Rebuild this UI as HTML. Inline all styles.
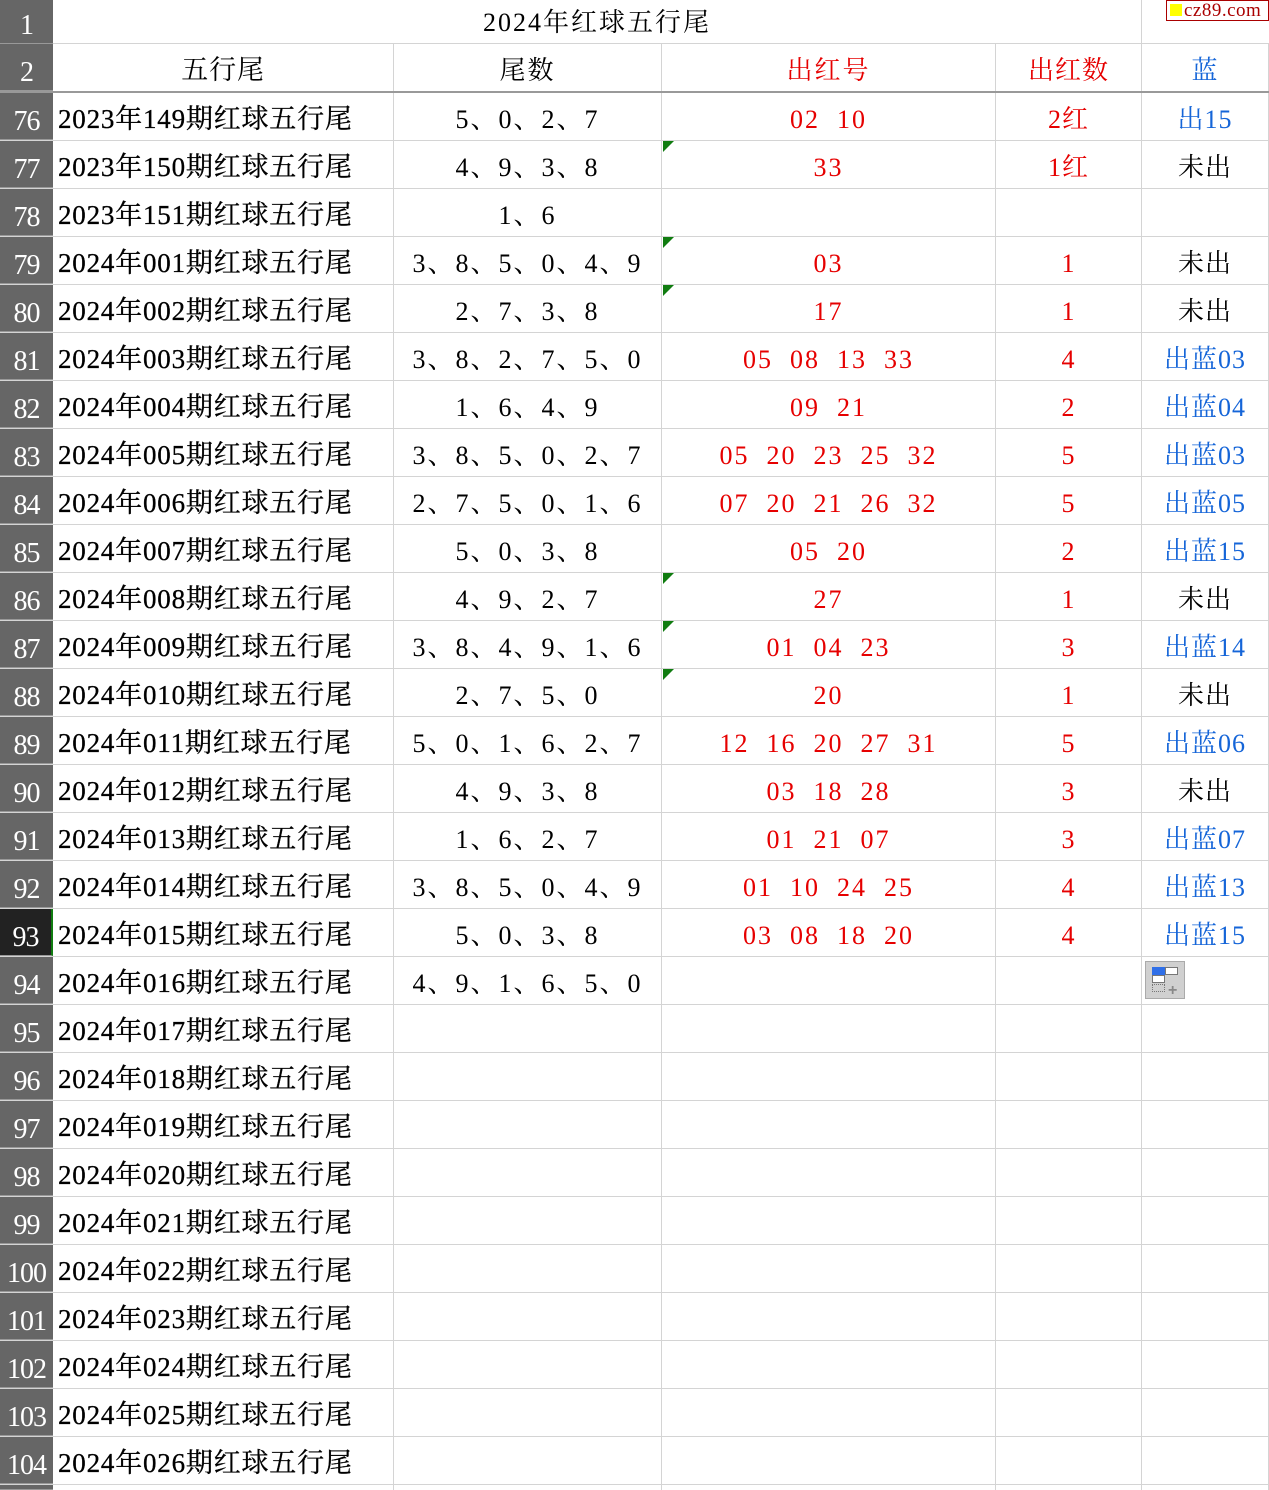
<!DOCTYPE html>
<html><head><meta charset="utf-8"><style>
*{margin:0;padding:0;box-sizing:border-box}
html,body{width:1269px;height:1490px;overflow:hidden}
body{background:#fff;font-family:"Liberation Serif","Noto Serif CJK SC",serif;position:relative}
.r{position:absolute;left:0;width:1269px;height:48px;border-bottom:1px solid #d4d4d4}
.r>div{position:absolute;top:0;height:100%;border-right:1px solid #d4d4d4;font-size:26px;line-height:53px;text-align:center;white-space:pre}
.h{left:0;width:53px;background:#666;color:#fff;border-right:none!important;border-bottom:1px solid #999;line-height:normal!important;padding-top:13px;font-size:28px!important;letter-spacing:-1px}
.a{left:53px;width:341px;text-align:left!important;padding-left:5px;font-size:27px!important;color:#000;letter-spacing:0.8px;-webkit-text-stroke:0.3px #000}
.b{left:394px;width:268px;letter-spacing:2px}
.c{left:662px;width:334px;color:#e60000;letter-spacing:2px}
.d{left:996px;width:146px;color:#e60000;letter-spacing:1px}
.e{left:1142px;width:127px;color:#1565d8;letter-spacing:1px}
.k{color:#000!important}
.t::before{content:"";position:absolute;left:1px;top:0;border-top:11px solid #107c10;border-right:11px solid transparent}
</style></head><body>
<div class="r" style="top:0;height:44px"><div class="h" style="height:44px;padding-top:10px">1</div><div style="left:53px;width:1089px;line-height:46px;letter-spacing:2px">2024年红球五行尾</div><div style="left:1142px;width:127px;border-right:none"></div></div>
<div style="position:absolute;left:1166px;top:0;width:103px;height:21px;border:1px solid #a00;background:#fff;font-size:19px;line-height:19px;color:#a00;padding-left:3px;letter-spacing:0.5px;white-space:nowrap;overflow:hidden"><span style="display:inline-block;width:12px;height:12px;background:#ff0;margin-right:2px"></span>cz89.com</div>
<div class="r" style="top:44px;height:49px;border-bottom:2px solid #999"><div class="h">2</div><div class="a" style="text-align:center!important;padding:0;-webkit-text-stroke:0">五行尾</div><div class="b">尾数</div><div class="c">出红号</div><div class="d">出红数</div><div class="e">蓝</div></div>
<div class="r" style="top:93px"><div class="h">76</div><div class="a">2023年149期红球五行尾</div><div class="b">5、0、2、7</div><div class="c">02  10</div><div class="d">2红</div><div class="e">出15</div></div>
<div class="r" style="top:141px"><div class="h">77</div><div class="a">2023年150期红球五行尾</div><div class="b">4、9、3、8</div><div class="c t">33</div><div class="d">1红</div><div class="e k">未出</div></div>
<div class="r" style="top:189px"><div class="h">78</div><div class="a">2023年151期红球五行尾</div><div class="b">1、6</div><div class="c"></div><div class="d"></div><div class="e"></div></div>
<div class="r" style="top:237px"><div class="h">79</div><div class="a">2024年001期红球五行尾</div><div class="b">3、8、5、0、4、9</div><div class="c t">03</div><div class="d">1</div><div class="e k">未出</div></div>
<div class="r" style="top:285px"><div class="h">80</div><div class="a">2024年002期红球五行尾</div><div class="b">2、7、3、8</div><div class="c t">17</div><div class="d">1</div><div class="e k">未出</div></div>
<div class="r" style="top:333px"><div class="h">81</div><div class="a">2024年003期红球五行尾</div><div class="b">3、8、2、7、5、0</div><div class="c">05  08  13  33</div><div class="d">4</div><div class="e">出蓝03</div></div>
<div class="r" style="top:381px"><div class="h">82</div><div class="a">2024年004期红球五行尾</div><div class="b">1、6、4、9</div><div class="c">09  21</div><div class="d">2</div><div class="e">出蓝04</div></div>
<div class="r" style="top:429px"><div class="h">83</div><div class="a">2024年005期红球五行尾</div><div class="b">3、8、5、0、2、7</div><div class="c">05  20  23  25  32</div><div class="d">5</div><div class="e">出蓝03</div></div>
<div class="r" style="top:477px"><div class="h">84</div><div class="a">2024年006期红球五行尾</div><div class="b">2、7、5、0、1、6</div><div class="c">07  20  21  26  32</div><div class="d">5</div><div class="e">出蓝05</div></div>
<div class="r" style="top:525px"><div class="h">85</div><div class="a">2024年007期红球五行尾</div><div class="b">5、0、3、8</div><div class="c">05  20</div><div class="d">2</div><div class="e">出蓝15</div></div>
<div class="r" style="top:573px"><div class="h">86</div><div class="a">2024年008期红球五行尾</div><div class="b">4、9、2、7</div><div class="c t">27</div><div class="d">1</div><div class="e k">未出</div></div>
<div class="r" style="top:621px"><div class="h">87</div><div class="a">2024年009期红球五行尾</div><div class="b">3、8、4、9、1、6</div><div class="c t">01  04  23</div><div class="d">3</div><div class="e">出蓝14</div></div>
<div class="r" style="top:669px"><div class="h">88</div><div class="a">2024年010期红球五行尾</div><div class="b">2、7、5、0</div><div class="c t">20</div><div class="d">1</div><div class="e k">未出</div></div>
<div class="r" style="top:717px"><div class="h">89</div><div class="a">2024年011期红球五行尾</div><div class="b">5、0、1、6、2、7</div><div class="c">12  16  20  27  31</div><div class="d">5</div><div class="e">出蓝06</div></div>
<div class="r" style="top:765px"><div class="h">90</div><div class="a">2024年012期红球五行尾</div><div class="b">4、9、3、8</div><div class="c">03  18  28</div><div class="d">3</div><div class="e k">未出</div></div>
<div class="r" style="top:813px"><div class="h">91</div><div class="a">2024年013期红球五行尾</div><div class="b">1、6、2、7</div><div class="c">01  21  07</div><div class="d">3</div><div class="e">出蓝07</div></div>
<div class="r" style="top:861px"><div class="h">92</div><div class="a">2024年014期红球五行尾</div><div class="b">3、8、5、0、4、9</div><div class="c">01  10  24  25</div><div class="d">4</div><div class="e">出蓝13</div></div>
<div class="r" style="top:909px"><div class="h" style="background:#222;border-right:2px solid #107c10!important">93</div><div class="a">2024年015期红球五行尾</div><div class="b">5、0、3、8</div><div class="c">03  08  18  20</div><div class="d">4</div><div class="e">出蓝15</div></div>
<div class="r" style="top:957px"><div class="h">94</div><div class="a">2024年016期红球五行尾</div><div class="b">4、9、1、6、5、0</div><div class="c"></div><div class="d"></div><div class="e"></div></div>
<div style="position:absolute;left:1145px;top:961px;width:40px;height:38px;background:#d0d0d0;border:1px solid #aaa">
<div style="position:absolute;left:6px;top:5px;width:13px;height:8px;background:#2f6fe8"></div>
<div style="position:absolute;left:19px;top:5px;width:13px;height:8px;background:#fff;border:1px solid #777"></div>
<div style="position:absolute;left:6px;top:13px;width:13px;height:8px;background:#fff;border:1px solid #777"></div>
<div style="position:absolute;left:6px;top:22px;width:13px;height:8px;border:1px dotted #777"></div>
<div style="position:absolute;left:22px;top:20px;color:#888;font:bold 16px 'Liberation Sans',sans-serif">+</div>
</div>
<div class="r" style="top:1005px"><div class="h">95</div><div class="a">2024年017期红球五行尾</div><div class="b"></div><div class="c"></div><div class="d"></div><div class="e"></div></div>
<div class="r" style="top:1053px"><div class="h">96</div><div class="a">2024年018期红球五行尾</div><div class="b"></div><div class="c"></div><div class="d"></div><div class="e"></div></div>
<div class="r" style="top:1101px"><div class="h">97</div><div class="a">2024年019期红球五行尾</div><div class="b"></div><div class="c"></div><div class="d"></div><div class="e"></div></div>
<div class="r" style="top:1149px"><div class="h">98</div><div class="a">2024年020期红球五行尾</div><div class="b"></div><div class="c"></div><div class="d"></div><div class="e"></div></div>
<div class="r" style="top:1197px"><div class="h">99</div><div class="a">2024年021期红球五行尾</div><div class="b"></div><div class="c"></div><div class="d"></div><div class="e"></div></div>
<div class="r" style="top:1245px"><div class="h">100</div><div class="a">2024年022期红球五行尾</div><div class="b"></div><div class="c"></div><div class="d"></div><div class="e"></div></div>
<div class="r" style="top:1293px"><div class="h">101</div><div class="a">2024年023期红球五行尾</div><div class="b"></div><div class="c"></div><div class="d"></div><div class="e"></div></div>
<div class="r" style="top:1341px"><div class="h">102</div><div class="a">2024年024期红球五行尾</div><div class="b"></div><div class="c"></div><div class="d"></div><div class="e"></div></div>
<div class="r" style="top:1389px"><div class="h">103</div><div class="a">2024年025期红球五行尾</div><div class="b"></div><div class="c"></div><div class="d"></div><div class="e"></div></div>
<div class="r" style="top:1437px"><div class="h">104</div><div class="a">2024年026期红球五行尾</div><div class="b"></div><div class="c"></div><div class="d"></div><div class="e"></div></div>
<div class="r" style="top:1485px;height:5px;border-bottom:none"><div class="h" style="padding:0"></div><div class="a"></div><div class="b"></div><div class="c"></div><div class="d"></div><div class="e"></div></div>
</body></html>
